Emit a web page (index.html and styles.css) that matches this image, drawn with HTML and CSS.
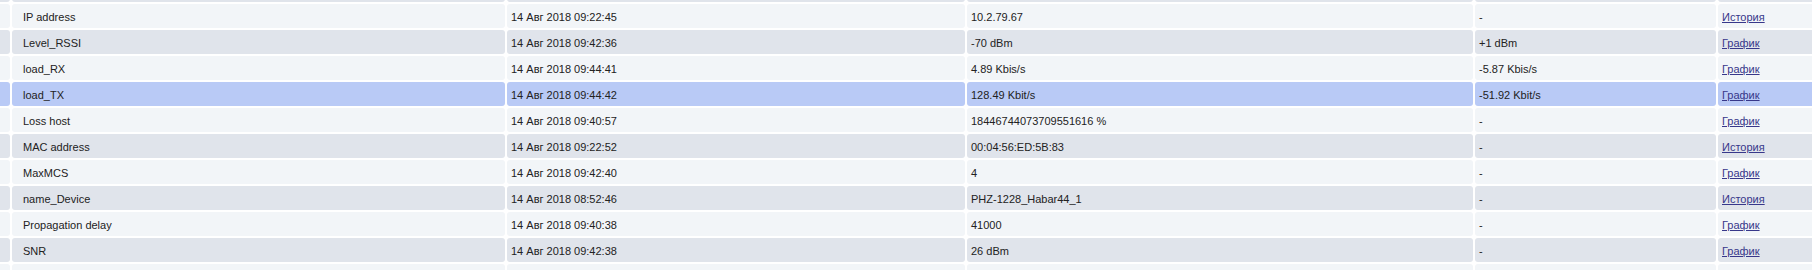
FILE: index.html
```html
<!DOCTYPE html>
<html lang="ru">
<head>
<meta charset="utf-8">
<title>Параметры</title>
<link rel="stylesheet" href="styles.css">
</head>
<body>
<table class="params">
  <colgroup>
    <col class="c-mark"><col class="c-name"><col class="c-date"><col class="c-value"><col class="c-delta"><col class="c-link">
  </colgroup>
  <tbody>
    <tr class="odd"><td></td><td></td><td></td><td></td><td></td><td></td></tr>
    <tr class="even"><td></td><td class="name">IP address</td><td>14 Авг 2018 09:22:45</td><td>10.2.79.67</td><td>-</td><td><a href="#">История</a></td></tr>
    <tr class="odd"><td></td><td class="name">Level_RSSI</td><td>14 Авг 2018 09:42:36</td><td>-70 dBm</td><td>+1 dBm</td><td><a href="#">График</a></td></tr>
    <tr class="even"><td></td><td class="name">load_RX</td><td>14 Авг 2018 09:44:41</td><td>4.89 Kbis/s</td><td>-5.87 Kbis/s</td><td><a href="#">График</a></td></tr>
    <tr class="sel"><td></td><td class="name">load_TX</td><td>14 Авг 2018 09:44:42</td><td>128.49 Kbit/s</td><td>-51.92 Kbit/s</td><td><a href="#">График</a></td></tr>
    <tr class="even"><td></td><td class="name">Loss host</td><td>14 Авг 2018 09:40:57</td><td>18446744073709551616 %</td><td>-</td><td><a href="#">График</a></td></tr>
    <tr class="odd"><td></td><td class="name">MAC address</td><td>14 Авг 2018 09:22:52</td><td>00:04:56:ED:5B:83</td><td>-</td><td><a href="#">История</a></td></tr>
    <tr class="even"><td></td><td class="name">MaxMCS</td><td>14 Авг 2018 09:42:40</td><td>4</td><td>-</td><td><a href="#">График</a></td></tr>
    <tr class="odd"><td></td><td class="name">name_Device</td><td>14 Авг 2018 08:52:46</td><td>PHZ-1228_Habar44_1</td><td>-</td><td><a href="#">История</a></td></tr>
    <tr class="even"><td></td><td class="name">Propagation delay</td><td>14 Авг 2018 09:40:38</td><td>41000</td><td>-</td><td><a href="#">График</a></td></tr>
    <tr class="odd"><td></td><td class="name">SNR</td><td>14 Авг 2018 09:42:38</td><td>26 dBm</td><td>-</td><td><a href="#">График</a></td></tr>
    <tr class="even"><td></td><td></td><td></td><td></td><td></td><td></td></tr>
  </tbody>
</table>
</body>
</html>
```
FILE: styles.css
```css
html, body {
  margin: 0;
  padding: 0;
  background: #ffffff;
  overflow: hidden;
}

.params {
  border-collapse: separate;
  border-spacing: 2px;
  table-layout: fixed;
  width: 1862px;
  margin: -24px 0 0 -22px;
  font-family: "Liberation Sans", Arial, sans-serif;
  font-size: 11px;
  color: #222222;
}

.c-mark { width: 30px; }
.c-name { width: 493px; }
.c-date { width: 458px; }
.c-value { width: 506px; }
.c-delta { width: 241px; }
.c-link { width: 120px; }

.params td {
  height: 24px;
  padding: 2px 4px 0;
  border-radius: 3px;
  white-space: nowrap;
  overflow: hidden;
  vertical-align: middle;
  box-sizing: border-box;
}

.params td.name {
  padding-left: 11px;
}

.even td { background: #f2f5f8; }
.odd td { background: #e0e4eb; }
.sel td { background: #b9caf6; }

.params a {
  color: #37378a;
  text-decoration: underline;
}
```
